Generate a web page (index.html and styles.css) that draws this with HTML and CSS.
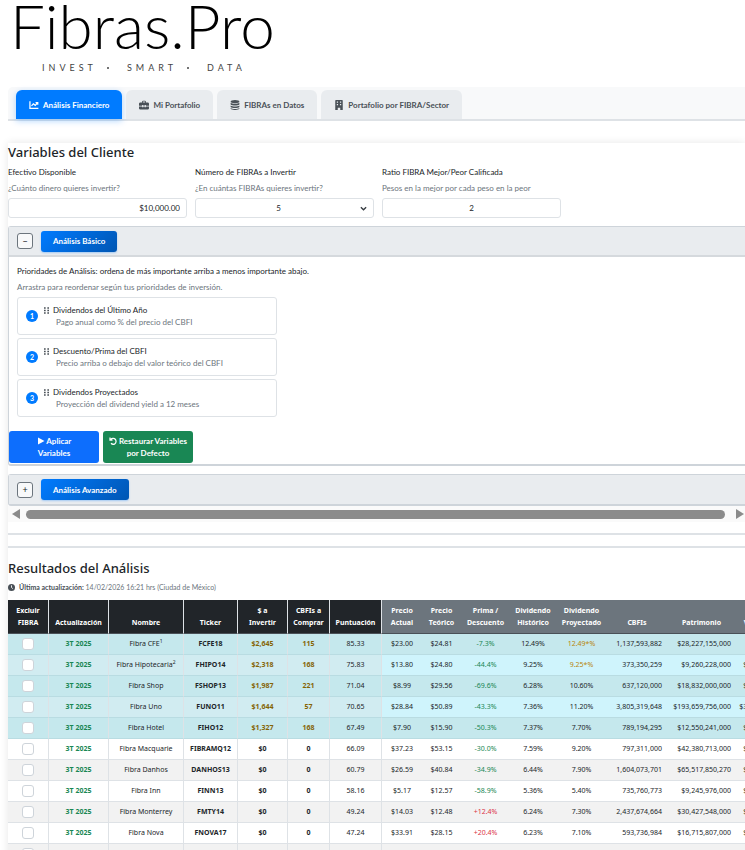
FILE: index.html
```html
<!DOCTYPE html>
<html lang="es">
<head>
    <meta charset="UTF-8">
    <meta name="viewport" content="width=device-width, initial-scale=1.0">
    <title>Fibras.Pro</title>
    <link rel="stylesheet" href="styles.css">
</head>
<body>

    <header class="brand">
        <h1 class="brand-name">Fibras.Pro</h1>
        <p class="brand-tagline"><span>INVEST</span><span class="dot"></span><span>SMART</span><span class="dot"></span><span>DATA</span></p>
    </header>

    <!-- Pestañas -->
    <nav class="tabs">
        <button type="button" class="tab active">
            <svg class="icon" viewBox="0 0 16 16"><path d="M1.500 2v11.500H15M4 9.500l3-3.500 3 2.500 4-4.500M10.500 4H14v3.500" fill="none" stroke="currentColor" stroke-width="2"/></svg>
            Análisis Financiero
        </button>
        <button type="button" class="tab">
            <svg class="icon" viewBox="0 0 16 16"><path d="M5 4V2.500C5 1.600 5.600 1 6.500 1h3c.9 0 1.500.6 1.500 1.500V4h3c1 0 2 1 2 2v3h-5V8H9v1H7V8H5v1H0V6c0-1 1-2 2-2zm1.500 0h3V2.500h-3zM0 10.500h5v1h2v-1h2v1h2v-1h5V13c0 1-1 2-2 2H2c-1 0-2-1-2-2z" fill="currentColor"/></svg>
            Mi Portafolio
        </button>
        <button type="button" class="tab">
            <svg class="icon" viewBox="0 0 16 16"><g fill="currentColor"><ellipse cx="8" cy="2.500" rx="7" ry="2.500"/><path d="M1 4.500c3 2 11 2 14 0V7c-2 2.200-12 2.200-14 0zM1 8.700c3 2 11 2 14 0v2.300c-2 2.200-12 2.200-14 0zM1 12.700c3 2 11 2 14 0v1.300c-2 2.700-12 2.700-14 0z"/></g></svg>
            FIBRAs en Datos
        </button>
        <button type="button" class="tab">
            <svg class="icon" viewBox="0 0 16 16"><path d="M3 0h10c.6 0 1 .4 1 1v15h-4v-3.500H6V16H2V1c0-.6.4-1 1-1zm1.500 2.500v2h2v-2zm5 0v2h2v-2zm-5 4v2h2v-2zm5 0v2h2v-2z" fill="currentColor" fill-rule="evenodd"/></svg>
            Portafolio por FIBRA/Sector
        </button>
    </nav>

    <main class="panel">
        <h2>Variables del Cliente</h2>

        <div class="fields">
            <div class="field">
                <label for="efectivo">Efectivo Disponible</label>
                <small>¿Cuánto dinero quieres invertir?</small>
                <input type="text" id="efectivo" class="money" value="$10,000.00">
            </div>
            <div class="field">
                <label for="numFibras">Número de FIBRAs a Invertir</label>
                <small>¿En cuántas FIBRAs quieres invertir?</small>
                <div class="select-wrap">
                    <select id="numFibras">
                        <option>5</option>
                    </select>
                    <svg class="chevron" viewBox="0 0 16 16"><path d="M2 5l6 6 6-6" fill="none" stroke="#343a40" stroke-width="3"/></svg>
                </div>
            </div>
            <div class="field">
                <label for="ratio">Ratio FIBRA Mejor/Peor Calificada</label>
                <small>Pesos en la mejor por cada peso en la peor</small>
                <input type="text" id="ratio" value="2">
            </div>
        </div>

        <!-- Análisis Básico -->
        <section class="card">
            <div class="card-header">
                <button type="button" class="toggle" aria-label="Contraer">−</button>
                <button type="button" class="card-title">Análisis Básico</button>
            </div>
            <div class="card-body">
                <p class="lead">Prioridades de Análisis: ordena de más importante arriba a menos importante abajo.</p>
                <p class="hint">Arrastra para reordenar según tus prioridades de inversión.</p>
                <ol class="priorities">
                    <li>
                        <span class="number">1</span>
                        <div>
                            <p class="priority-name"><svg class="grip" viewBox="0 0 6 8"><path d="M0 0h2v2H0zM4 0h2v2H4zM0 3h2v2H0zM4 3h2v2H4zM0 6h2v2H0zM4 6h2v2H4z"/></svg>Dividendos del Último Año</p>
                            <p class="priority-desc">Pago anual como % del precio del CBFI</p>
                        </div>
                    </li>
                    <li>
                        <span class="number">2</span>
                        <div>
                            <p class="priority-name"><svg class="grip" viewBox="0 0 6 8"><path d="M0 0h2v2H0zM4 0h2v2H4zM0 3h2v2H0zM4 3h2v2H4zM0 6h2v2H0zM4 6h2v2H4z"/></svg>Descuento/Prima del CBFI</p>
                            <p class="priority-desc">Precio arriba o debajo del valor teórico del CBFI</p>
                        </div>
                    </li>
                    <li>
                        <span class="number">3</span>
                        <div>
                            <p class="priority-name"><svg class="grip" viewBox="0 0 6 8"><path d="M0 0h2v2H0zM4 0h2v2H4zM0 3h2v2H0zM4 3h2v2H4zM0 6h2v2H0zM4 6h2v2H4z"/></svg>Dividendos Proyectados</p>
                            <p class="priority-desc">Proyección del dividend yield a 12 meses</p>
                        </div>
                    </li>
                </ol>
            </div>
            <div class="actions">
                <button type="button" class="btn btn-primary"><svg class="btn-icon" viewBox="0 0 16 16"><path d="M2 1l13 7-13 7z" fill="currentColor"/></svg> Aplicar<br>Variables</button>
                <button type="button" class="btn btn-success"><svg class="btn-icon" viewBox="0 0 16 16"><path d="M2 1v5h5M2.500 6C5 2 10 1.500 12.500 4.500s2 7.500-1 9.200c-2.500 1.300-5.500.8-7.500-1.200" fill="none" stroke="currentColor" stroke-width="2.500"/></svg> Restaurar Variables<br>por Defecto</button>
            </div>
        </section>

        <!-- Análisis Avanzado -->
        <section class="card card-closed">
            <div class="card-header">
                <button type="button" class="toggle" aria-label="Expandir">+</button>
                <button type="button" class="card-title">Análisis Avanzado</button>
            </div>
        </section>

        <div class="scrollbar">
            <span class="arrow arrow-left"></span>
            <span class="thumb"></span>
            <span class="arrow arrow-right"></span>
        </div>

        <hr>
        <hr>

        <!-- Resultados -->
        <h2>Resultados del Análisis</h2>
        <p class="updated">
            <svg class="clock" viewBox="0 0 16 16"><circle cx="8" cy="8" r="8" fill="#495057"/><path d="M8 3v5l3 2.500" fill="none" stroke="#fff" stroke-width="2"/></svg>
            <span><strong>Última actualización:</strong> 14/02/2026 16:21 hrs (Ciudad de México)</span>
        </p>

        <div class="table-wrap">
            <table class="results">
                <colgroup>
                    <col class="w-excluir"><col class="w-fecha"><col class="w-nombre"><col class="w-ticker"><col class="w-invertir"><col class="w-comprar"><col class="w-puntos">
                    <col class="w-actual"><col class="w-teorico"><col class="w-prima"><col class="w-historico"><col class="w-proyectado"><col class="w-cbfis"><col class="w-patrimonio"><col class="w-valor">
                </colgroup>
                <thead>
                    <tr>
                        <th>Excluir<br>FIBRA</th><th>Actualización</th><th>Nombre</th><th>Ticker</th><th>$ a<br>Invertir</th><th>CBFIs a<br>Comprar</th><th>Puntuación</th>
                        <th>Precio<br>Actual</th><th>Precio<br>Teórico</th><th>Prima /<br>Descuento</th><th>Dividendo<br>Histórico</th><th>Dividendo<br>Proyectado</th><th>CBFIs</th><th>Patrimonio</th><th>Valor Mercado</th>
                    </tr>
                </thead>
                <tbody>
                    <tr class="selected"><td><input type="checkbox" aria-label="Excluir FCFE18"></td><td>3T 2025</td><td>Fibra CFE<sup>1</sup></td><td>FCFE18</td><td>$2,645</td><td>115</td><td>85.33</td><td>$23.00</td><td>$24.81</td><td class="down">-7.3%</td><td>12.49%</td><td class="estimate">12.49*%</td><td>1,137,593,882</td><td>$28,227,155,000</td><td>$6,164,659,286</td></tr>
                    <tr class="selected"><td><input type="checkbox" aria-label="Excluir FHIPO14"></td><td>3T 2025</td><td>Fibra Hipotecaria<sup>2</sup></td><td>FHIPO14</td><td>$2,318</td><td>168</td><td>75.83</td><td>$13.80</td><td>$24.80</td><td class="down">-44.4%</td><td>9.25%</td><td class="estimate">9.25*%</td><td>373,350,259</td><td>$9,260,228,000</td><td>$15,152,233,574</td></tr>
                    <tr class="selected"><td><input type="checkbox" aria-label="Excluir FSHOP13"></td><td>3T 2025</td><td>Fibra Shop</td><td>FSHOP13</td><td>$1,987</td><td>221</td><td>71.04</td><td>$8.99</td><td>$29.56</td><td class="down">-69.6%</td><td>6.28%</td><td>10.60%</td><td>637,120,000</td><td>$18,832,000,000</td><td>$15,727,708,800</td></tr>
                    <tr class="selected"><td><input type="checkbox" aria-label="Excluir FUNO11"></td><td>3T 2025</td><td>Fibra Uno</td><td>FUNO11</td><td>$1,644</td><td>57</td><td>70.65</td><td>$28.84</td><td>$50.89</td><td class="down">-43.3%</td><td>7.36%</td><td>11.20%</td><td>3,805,319,648</td><td>$193,659,756,000</td><td>$309,745,418,648</td></tr>
                    <tr class="selected"><td><input type="checkbox" aria-label="Excluir FIHO12"></td><td>3T 2025</td><td>Fibra Hotel</td><td>FIHO12</td><td>$1,327</td><td>168</td><td>67.49</td><td>$7.90</td><td>$15.90</td><td class="down">-50.3%</td><td>7.37%</td><td>7.70%</td><td>789,194,295</td><td>$12,550,241,000</td><td>$16,234,634,930</td></tr>
                    <tr><td><input type="checkbox" aria-label="Excluir FIBRAMQ12"></td><td>3T 2025</td><td>Fibra Macquarie</td><td>FIBRAMQ12</td><td>$0</td><td>0</td><td>66.09</td><td>$37.23</td><td>$53.15</td><td class="down">-30.0%</td><td>7.59%</td><td>9.20%</td><td>797,311,000</td><td>$42,380,713,000</td><td>$29,683,888,530</td></tr>
                    <tr><td><input type="checkbox" aria-label="Excluir DANHOS13"></td><td>3T 2025</td><td>Fibra Danhos</td><td>DANHOS13</td><td>$0</td><td>0</td><td>60.79</td><td>$26.59</td><td>$40.84</td><td class="down">-34.9%</td><td>6.44%</td><td>7.90%</td><td>1,604,073,701</td><td>$65,517,850,270</td><td>$42,652,319,709</td></tr>
                    <tr><td><input type="checkbox" aria-label="Excluir FINN13"></td><td>3T 2025</td><td>Fibra Inn</td><td>FINN13</td><td>$0</td><td>0</td><td>58.16</td><td>$5.17</td><td>$12.57</td><td class="down">-58.9%</td><td>5.36%</td><td>5.40%</td><td>735,760,773</td><td>$9,245,976,000</td><td>$13,803,883,196</td></tr>
                    <tr><td><input type="checkbox" aria-label="Excluir FMTY14"></td><td>3T 2025</td><td>Fibra Monterrey</td><td>FMTY14</td><td>$0</td><td>0</td><td>49.24</td><td>$14.03</td><td>$12.48</td><td class="up">+12.4%</td><td>6.24%</td><td>7.30%</td><td>2,437,674,664</td><td>$30,427,548,000</td><td>$34,200,575,535</td></tr>
                    <tr><td><input type="checkbox" aria-label="Excluir FNOVA17"></td><td>3T 2025</td><td>Fibra Nova</td><td>FNOVA17</td><td>$0</td><td>0</td><td>47.24</td><td>$33.91</td><td>$28.15</td><td class="up">+20.4%</td><td>6.23%</td><td>7.10%</td><td>593,736,984</td><td>$16,715,807,000</td><td>$20,133,621,127</td></tr>
                    <tr><td><input type="checkbox" aria-label="Excluir FIBRA"></td><td></td><td></td><td></td><td></td><td></td><td></td><td></td><td></td><td></td><td></td><td></td><td></td><td></td><td></td></tr>
                </tbody>
            </table>
        </div>
    </main>

</body>
</html>
```

FILE: styles.css
```css
/* Estilos generales */
* {
    box-sizing: border-box;
}

html {
    overflow: hidden;
}

body {
    margin: 0;
    padding-left: 8px;
    height: 100vh;
    overflow: hidden;
    background-color: #fff;
    color: #212529;
    font-family: Lato, "Noto Sans", sans-serif;
    font-size: 8px;
    line-height: 12px;
}

h1, h2, p, ol {
    margin: 0;
    padding: 0;
}

button, input, select {
    font: inherit;
    color: inherit;
}

/* Logo */
.brand {
    height: 87px;
    padding-left: 2px;
    color: #000;
}

.brand-name {
    font-size: 62px;
    font-weight: 300;
    line-height: 50px;
}

.brand-tagline {
    display: flex;
    align-items: center;
    padding: 12px 0 0 32px;
    font-size: 9px;
    letter-spacing: 4px;
    color: #444;
}

.dot {
    width: 2px;
    height: 2px;
    margin: 0 18px 0 10px;
    border-radius: 50%;
    background-color: #444;
}

/* Pestañas */
.tabs {
    display: flex;
    gap: 4px;
    height: 34px;
    padding: 3px 8px 0;
    border-bottom: 2px solid #dee2e6;
    border-radius: 5px 0 0 0;
    background-color: #f8f9fa;
}

.tab {
    display: flex;
    align-items: center;
    gap: 4px;
    padding: 0 13px;
    border: none;
    border-radius: 6px 6px 0 0;
    background-color: #e9ecef;
    color: #495057;
    font-weight: 700;
    white-space: nowrap;
}

.tab.active {
    background-color: #007bff;
    color: #fff;
    box-shadow: 0 2px 6px rgba(0, 123, 255, 0.3);
}

.icon {
    width: 10px;
    height: 10px;
}

/* Panel principal */
.panel {
    margin-top: 22px;
    box-shadow: 0 0 8px rgba(0, 0, 0, 0.1);
}

h2 {
    padding-top: 1px;
    font-family: "Noto Sans", sans-serif;
    font-size: 13px;
    font-weight: 500;
    line-height: 16px;
}

.fields {
    display: flex;
    gap: 8px;
    padding-top: 6px;
}

.field {
    display: flex;
    flex-direction: column;
    flex: 0 0 179px;
}

.field small {
    margin: 4px 0;
    font-size: 8px;
    color: #6c757d;
}

.field input,
.field select {
    display: block;
    width: 100%;
    height: 20px;
    padding: 0 6px;
    border: 1px solid #dee2e6;
    border-radius: 3px;
    background-color: #fff;
    text-align: center;
    text-align-last: center;
    appearance: none;
}

.field select {
    padding-right: 18px;
}

.field .money {
    text-align: right;
    text-align-last: right;
}

.select-wrap {
    position: relative;
}

.chevron {
    position: absolute;
    right: 7px;
    top: 7px;
    width: 7px;
    height: 7px;
}

/* Tarjetas de análisis */
.card {
    margin-top: 8px;
    border: 1px solid #ced4da;
    border-right: none;
    border-bottom-width: 2px;
    border-radius: 3px 0 0 3px;
}

.card-header {
    display: flex;
    align-items: center;
    gap: 8px;
    height: 30px;
    padding-left: 8px;
    border-bottom: 2px solid #d5d9dd;
    background-color: #e9ecef;
}

.card-closed .card-header {
    height: 29px;
    border-bottom: none;
}

.toggle {
    width: 16px;
    height: 16px;
    padding: 0;
    border: 1px solid #6c757d;
    border-radius: 3px;
    background-color: #f8f9fa;
    font-size: 9px;
    line-height: 13px;
}

.card-title {
    height: 21px;
    padding: 0 12px;
    border: none;
    border-radius: 3px;
    background: linear-gradient(135deg, #007bff, #0056b3);
    box-shadow: 0 1px 2px rgba(0, 123, 255, 0.3);
    color: #fff;
    font-weight: 700;
}

.card-body {
    padding: 8px 8px 0;
}

.hint {
    margin-top: 4px;
    color: #6c757d;
}

.priorities {
    display: flex;
    flex-direction: column;
    gap: 3px;
    width: 260px;
    margin-top: 4px;
    list-style: none;
}

.priorities li {
    display: flex;
    align-items: center;
    gap: 6px;
    height: 38px;
    padding-left: 8px;
    border: 1px solid #dee2e6;
    border-radius: 3px;
}

.number {
    width: 12px;
    height: 12px;
    border-radius: 50%;
    background-color: #007bff;
    color: #fff;
    font-size: 7px;
    font-weight: 700;
    text-align: center;
}

.priority-name {
    display: flex;
    align-items: center;
    gap: 4px;
}

.priority-desc {
    padding-left: 12px;
    color: #6c757d;
}

.grip {
    width: 5px;
    height: 7px;
    fill: #495057;
}

.actions {
    display: flex;
    gap: 4px;
    padding: 14px 0 1px;
}

.btn {
    min-width: 90px;
    height: 32px;
    padding: 0 6px;
    border: none;
    border-radius: 3px;
    color: #fff;
    font-weight: 700;
}

.btn-primary {
    background-color: #0d6efd;
}

.btn-success {
    background-color: #198754;
}

.btn-icon {
    width: 8px;
    height: 8px;
    vertical-align: -1px;
}

/* Barra de desplazamiento */
.scrollbar {
    display: flex;
    align-items: center;
    justify-content: space-between;
    height: 16px;
    padding: 0 1px 0 4px;
    background-color: #fafafa;
}

.thumb {
    flex: 1;
    height: 9px;
    margin: 0 11px 0 6px;
    border-radius: 5px;
    background-color: #8b8b8b;
}

.arrow {
    border: 5px solid transparent;
}

.arrow-left {
    border-left: none;
    border-right: 8px solid #8b8b8b;
}

.arrow-right {
    border-right: none;
    border-left: 8px solid #8b8b8b;
}

hr {
    margin: 11px 0;
    border: none;
    border-top: 2px solid #dee2e6;
}

/* Tabla de resultados */
.updated {
    display: flex;
    align-items: center;
    gap: 4px;
    padding: 5px 0 7px;
    font-size: 7px;
    color: #6c757d;
}

.updated strong {
    color: #495057;
}

.clock {
    width: 7px;
    height: 7px;
}

.table-wrap {
    overflow: hidden;
}

.results {
    width: 794px;
    table-layout: fixed;
    border-collapse: separate;
    border-spacing: 0;
    font-family: "Noto Sans", sans-serif;
    font-size: 7px;
    white-space: nowrap;
}

.w-excluir { width: 41px; }
.w-fecha { width: 60px; }
.w-nombre { width: 75px; }
.w-ticker { width: 54px; }
.w-invertir { width: 50px; }
.w-comprar { width: 42px; }
.w-puntos { width: 52px; }
.w-actual { width: 40px; }
.w-teorico { width: 39px; }
.w-prima { width: 49px; }
.w-historico { width: 46px; }
.w-proyectado { width: 51px; }
.w-cbfis { width: 60px; }
.w-patrimonio { width: 69px; }
.w-valor { width: 66px; }

.results th {
    height: 34px;
    padding: 4px 0;
    border-bottom: 1px solid #495057;
    background-color: #6c757d;
    color: #fff;
    font-weight: 700;
    vertical-align: bottom;
}

.results th:nth-child(-n+7) {
    border-right: 1px solid #dee2e6;
    background-color: #212529;
}

.results td {
    height: 21px;
    padding: 0;
    border-bottom: 1px solid #dee2e6;
    text-align: center;
}

.results td:nth-child(-n+7) {
    border-right: 1px solid #dee2e6;
}

.results tbody tr:nth-child(odd) td {
    background-color: #f2f2f2;
}

.results tbody .selected:nth-child(n) td {
    border-bottom-color: #b9dce2;
    background-color: #c5e8ed;
}

.results tbody .selected:nth-child(even) td {
    background-color: #cff4fc;
}

.results tbody .selected:nth-child(even) td:nth-child(-n+7) {
    background-color: #d1ecf1;
}

.results td:nth-child(2) {
    color: #198754;
    font-weight: 700;
}

.results td:nth-child(4),
.results td:nth-child(5),
.results td:nth-child(6) {
    font-weight: 700;
}

.results .selected td:nth-child(5),
.results .selected td:nth-child(6) {
    color: #856404;
}

.results td:nth-child(n+13) {
    padding-right: 5px;
    text-align: right;
}

.results .down {
    color: #198754;
}

.results .up {
    color: #dc3545;
}

.results .estimate {
    color: #b8860b;
}

.results sup {
    font-size: 5px;
    line-height: 0;
}

.results input {
    display: block;
    width: 12px;
    height: 12px;
    margin: 0 auto;
    border: 1px solid #ced4da;
    border-radius: 3px;
    background-color: #fff;
    appearance: none;
}
```
